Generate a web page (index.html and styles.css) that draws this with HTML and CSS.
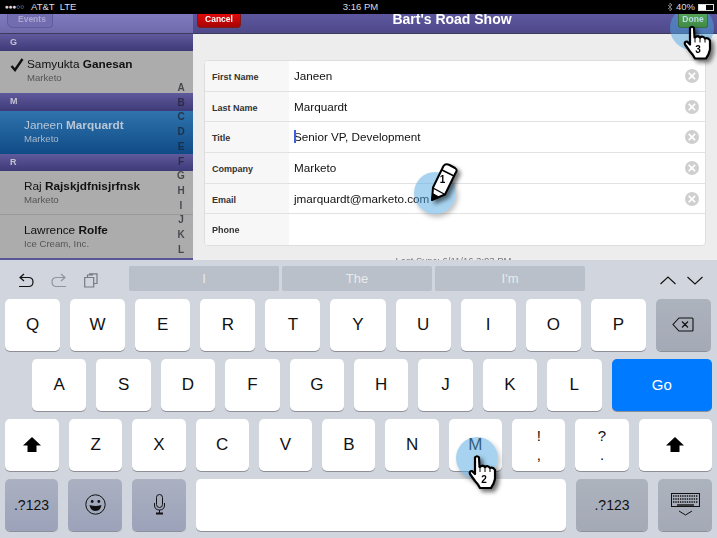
FILE: index.html
```html
<!doctype html>
<html lang="en">
<head>
	<meta charset="utf-8">
	<title>Bart's Road Show</title>
	<link rel="stylesheet" href="styles.css">
</head>
<body>
	<div class="screen">
		<div class="status">
			<div class="status-left"><span class="signal">●●●○○</span>AT&amp;T &nbsp;LTE</div>
			<div class="status-time">3:16 PM</div>
			<div class="status-right">
				<svg class="bt" width="6" height="10" viewBox="0 0 6 10"><path d="M1 3 L5 7 L3 9 V1 L5 3 L1 7" fill="none" stroke="#777" stroke-width="1"/></svg>
				<span>40%</span>
				<span class="battery"><span class="battery-fill"></span></span>
			</div>
		</div>

		<div class="main">
			<div class="sidebar">
				<div class="nav nav-side">
					<div class="btn-events">Events</div>
				</div>
				<div class="section">G</div>
				<div class="person person-first">
					<svg class="check" width="14" height="14" viewBox="0 0 14 14"><path d="M1.5 8 L5 12 L12.5 1" fill="none" stroke="#111" stroke-width="2.4"/></svg>
					<div class="person-name">Samyukta <b>Ganesan</b></div>
					<div class="person-co">Marketo</div>
				</div>
				<div class="section section-m">M</div>
				<div class="person person-selected">
					<div class="person-name">Janeen <b>Marquardt</b></div>
					<div class="person-co">Marketo</div>
				</div>
				<div class="section">R</div>
				<div class="person person-line">
					<div class="person-name">Raj <b>Rajskjdfnisjrfnsk</b></div>
					<div class="person-co">Marketo</div>
				</div>
				<div class="person person-end">
					<div class="person-name">Lawrence <b>Rolfe</b></div>
					<div class="person-co">Ice Cream, Inc.</div>
				</div>
				<div class="alpha">
					<span>A</span><span>B</span><span>C</span><span>D</span><span>E</span><span>F</span><span>G</span><span>H</span><span>I</span><span>J</span><span>K</span><span>L</span>
				</div>
			</div>

			<div class="detail">
				<div class="nav nav-detail">
					<div class="btn-cancel">Cancel</div>
					<div class="nav-title">Bart's Road Show</div>
					<div class="btn-done">Done</div>
				</div>
				<div class="form-area">
					<div class="card">
						<div class="field">
							<div class="field-label">First Name</div>
							<div class="field-value">Janeen</div>
							<span class="clear">×</span>
						</div>
						<div class="field">
							<div class="field-label">Last Name</div>
							<div class="field-value">Marquardt</div>
							<span class="clear">×</span>
						</div>
						<div class="field">
							<div class="field-label">Title</div>
							<div class="field-value"><span class="caret"></span>Senior VP, Development</div>
							<span class="clear">×</span>
						</div>
						<div class="field">
							<div class="field-label">Company</div>
							<div class="field-value">Marketo</div>
							<span class="clear">×</span>
						</div>
						<div class="field">
							<div class="field-label">Email</div>
							<div class="field-value">jmarquardt@marketo.com</div>
							<span class="clear">×</span>
						</div>
						<div class="field">
							<div class="field-label">Phone</div>
							<div class="field-value"></div>
						</div>
					</div>
					<div class="sync">Last Sync: 6/11/16 3:03 PM</div>
				</div>
			</div>
		</div>

		<div class="keyboard">
			<div class="toolbar">
				<div class="tools">
					<svg width="16" height="15" viewBox="0 0 16 15"><path d="M1 13.5 H10.5 Q15 13.5 15 9 Q15 4.5 10.5 4.5 H2 M6 1 L2 4.5 L6 8" fill="none" stroke="#111" stroke-width="1.2"/></svg>
					<svg width="16" height="15" viewBox="0 0 16 15"><path d="M15 13.5 H5.5 Q1 13.5 1 9 Q1 4.5 5.5 4.5 H14 M10 1 L14 4.5 L10 8" fill="none" stroke="#8f939c" stroke-width="1.2"/></svg>
					<svg width="14" height="15" viewBox="0 0 14 15"><path d="M.7 4.5 H9.7 V14 H.7 Z M3.5 4 V2 H9 M5 .8 H13 V10.5 H10" fill="none" stroke="#777b84" stroke-width="1.2"/></svg>
				</div>
				<div class="suggestions">
					<div class="suggestion">I</div>
					<div class="suggestion">The</div>
					<div class="suggestion">I'm</div>
				</div>
				<div class="arrows">
					<svg width="16" height="9" viewBox="0 0 16 9"><path d="M.5 8 L8 1 L15.5 8" fill="none" stroke="#111" stroke-width="1.1"/></svg>
					<svg width="16" height="9" viewBox="0 0 16 9"><path d="M.5 1 L8 8 L15.5 1" fill="none" stroke="#111" stroke-width="1.1"/></svg>
				</div>
			</div>

			<div class="row row-top">
				<div class="key">Q</div><div class="key">W</div><div class="key">E</div><div class="key">R</div><div class="key">T</div><div class="key">Y</div><div class="key">U</div><div class="key">I</div><div class="key">O</div><div class="key">P</div>
				<div class="key key-gray">
					<svg width="22" height="15" viewBox="0 0 22 15"><path d="M7 1 H20 Q21 1 21 2 V13 Q21 14 20 14 H7 L1 7.5 Z M10 4.5 L16 10.5 M16 4.5 L10 10.5" fill="none" stroke="#111" stroke-width="1.1"/></svg>
				</div>
			</div>
			<div class="row row-home">
				<div class="key">A</div><div class="key">S</div><div class="key">D</div><div class="key">F</div><div class="key">G</div><div class="key">H</div><div class="key">J</div><div class="key">K</div><div class="key">L</div>
				<div class="key key-go">Go</div>
			</div>
			<div class="row row-low">
				<div class="key">
					<svg width="18" height="16" viewBox="0 0 18 16"><path d="M9 0 L18 8.5 H13.5 V15 H4.5 V8.5 H0 Z" fill="#000"/></svg>
				</div>
				<div class="key">Z</div><div class="key">X</div><div class="key">C</div><div class="key">V</div><div class="key">B</div><div class="key">N</div><div class="key">M</div>
				<div class="key key-stack"><span>!</span><span>,</span></div>
				<div class="key key-stack"><span>?</span><span>.</span></div>
				<div class="key key-shift-r">
					<svg width="18" height="16" viewBox="0 0 18 16"><path d="M9 0 L18 8.5 H13.5 V15 H4.5 V8.5 H0 Z" fill="#000"/></svg>
				</div>
			</div>
			<div class="row row-bottom">
				<div class="key key-blue key-small">.?123</div>
				<div class="key key-blue">
					<svg width="21" height="21" viewBox="0 0 21 21"><circle cx="10.5" cy="10.5" r="9.7" fill="none" stroke="#111" stroke-width="1"/><circle cx="7.2" cy="7.5" r="1.4" fill="#111"/><circle cx="13.8" cy="7.5" r="1.4" fill="#111"/><path d="M4.5 11 Q10.5 13 16.5 11 Q15.5 17 10.5 17 Q5.5 17 4.5 11 Z" fill="#111"/></svg>
				</div>
				<div class="key key-blue">
					<svg width="11" height="21" viewBox="0 0 11 21"><rect x="2.5" y=".5" width="6" height="13" rx="3" fill="none" stroke="#111"/><path d="M.5 9 V11 Q.5 16 5.5 16 Q10.5 16 10.5 11 V9 M5.5 16 V19" fill="none" stroke="#111"/><rect x="2" y="18.5" width="7" height="2" fill="#111"/></svg>
				</div>
				<div class="key key-space"></div>
				<div class="key key-gray key-num">.?123</div>
				<div class="key key-gray key-hide">
					<svg width="29" height="23" viewBox="0 0 29 23"><rect x=".5" y=".5" width="28" height="13" fill="none" stroke="#111"/><path d="M2 3 H27 M2 6 H27 M2 9 H27" stroke="#111" stroke-width="1.6" stroke-dasharray="1.4 .9"/><path d="M6 12 H23" stroke="#111" stroke-width="1.4"/><path d="M8 18 L14.5 22 L21 18" fill="none" stroke="#111"/></svg>
				</div>
			</div>
		</div>

		<div class="spot spot-done"></div>
		<div class="spot spot-email"></div>
		<div class="spot spot-key"></div>

		<svg class="pointer pencil" width="36" height="48" viewBox="0 0 36 48">
			<path d="M7 40 L8 27.5 L18.5 6 Q20.5 3 24.5 5 L30 8 Q33 10 30.5 13 L20 34.5 Z" fill="#fff" stroke="#000" stroke-width="2" stroke-linejoin="round"/>
			<path d="M17 10 L29 16" stroke="#000" stroke-width="1.5"/>
			<path d="M7 40 L7.6 33.5 L14 37 Z" fill="#000" stroke="#000"/>
			<path d="M8 28 L20 34.5" stroke="#000" stroke-width="1.4"/>
			<text x="17.5" y="23" class="pointer-num">1</text>
		</svg>
		<svg class="pointer hand hand-key" width="30" height="34" viewBox="0 0 30 34">
			<path d="M7 2.5 Q9 0 11 2.5 L11.5 12 Q15 9.5 17 12 Q20 10 22 13 Q25 11.5 27 15 L27 24 Q26 29 23 33 L12 33 Q10 29 7 26 L2 19 Q1 16 4 16 L7 19 Z" fill="#fff" stroke="#000" stroke-width="2.2" stroke-linejoin="round"/>
			<path d="M12 12 V17 M17 12 V17 M22 13 V17" stroke="#000" stroke-width="1"/>
			<text x="16" y="28" class="pointer-num">2</text>
		</svg>
		<svg class="pointer hand hand-done" width="30" height="35" viewBox="0 0 30 34">
			<path d="M7 2.5 Q9 0 11 2.5 L11.5 12 Q15 9.5 17 12 Q20 10 22 13 Q25 11.5 27 15 L27 24 Q26 29 23 33 L12 33 Q10 29 7 26 L2 19 Q1 16 4 16 L7 19 Z" fill="#fff" stroke="#000" stroke-width="2.2" stroke-linejoin="round"/>
			<path d="M12 12 V17 M17 12 V17 M22 13 V17" stroke="#000" stroke-width="1"/>
			<text x="15" y="27" class="pointer-num">3</text>
		</svg>
	</div>
</body>
</html>
```

FILE: styles.css
```css
* {
	box-sizing: border-box;
}

body {
	margin: 0;
	background: #d1d5dd;
	font-family: "Liberation Sans", Arial, sans-serif;
}

.screen {
	position: relative;
	width: 717px;
	height: 538px;
	overflow: hidden;
	display: flex;
	flex-direction: column;
}

/* status bar */
.status {
	position: relative;
	z-index: 5;
	height: 14px;
	flex: none;
	background: #000;
	color: #ddd;
	font-size: 9.5px;
	line-height: 14px;
	display: flex;
	justify-content: space-between;
	padding: 0 3px 0 5px;
}

.signal {
	display: inline-block;
	width: 26px;
	font-size: 6.6px;
	vertical-align: 1px;
	letter-spacing: -0.2px;
}

.status-left {
	width: 200px;
}

.status-time {
	padding-left: 2px;
}

.status-right {
	width: 200px;
	display: flex;
	justify-content: flex-end;
	align-items: center;
	gap: 3px;
}

.battery {
	width: 16px;
	height: 7px;
	border: 1px solid #ddd;
	display: block;
}

.battery-fill {
	display: block;
	width: 7px;
	height: 100%;
	background: #fff;
}

.main {
	height: 246px;
	flex: none;
	display: flex;
	overflow: hidden;
}

/* app part is a bit soft like the source capture */
.sidebar,
.form-area,
.nav-title,
.btn-cancel,
.btn-done {
	filter: blur(0.35px);
}

.nav {
	height: 20px;
	display: flex;
	align-items: flex-start;
	border-bottom: 1px solid #3d3a5c;
}

.sidebar {
	position: relative;
	width: 193px;
	flex: none;
	background: #acacac;
	overflow: hidden;
}

.nav-side {
	background: linear-gradient(#7e7abd, #6f6bab);
	padding-left: 7px;
}

.btn-events {
	width: 46px;
	height: 14px;
	background: #716db0;
	border: 1px solid #5f5b9c;
	border-top: 0;
	border-radius: 0 0 4px 6px;
	color: #aba8d2;
	font-size: 8.5px;
	font-weight: bold;
	line-height: 11px;
	padding-left: 10px;
}

.section {
	height: 17px;
	background: linear-gradient(#5f5a9c, #3e3a78);
	color: #c3c2cf;
	font-size: 9px;
	font-weight: bold;
	line-height: 16px;
	padding-left: 10px;
}

.section-m {
	height: 18px;
}

.person {
	height: 42px;
	padding: 7px 0 0 27px;
	color: #111;
}

.person-first {
	padding-top: 6px;
}

.person-selected {
	height: 43px;
	padding-left: 24px;
	background: linear-gradient(#2f73ad, #0f4b87);
	color: #b9c7d6;
}

.person-line {
	height: 44px;
	padding: 8px 0 0 24px;
	border-bottom: 1px solid #999;
}

.person-end {
	height: 45px;
	padding: 8px 0 0 24px;
	border-bottom: 2px solid #5a5599;
}

.person-name {
	font-size: 11.8px;
	line-height: 14px;
}

.person-co {
	font-size: 9.6px;
	line-height: 14px;
	color: #555;
}

.person-selected .person-co {
	color: #a9b9cb;
}

.check {
	position: absolute;
	left: 10px;
	top: 44px;
}

.alpha {
	position: absolute;
	top: 67px;
	right: 5px;
	width: 14px;
	display: flex;
	flex-direction: column;
	align-items: center;
	font-size: 10px;
	font-weight: bold;
	line-height: 14.7px;
	color: rgba(30, 30, 40, 0.72);
}

/* edit form */
.detail {
	flex: 1;
	display: flex;
	flex-direction: column;
	background: #ededed;
}

.nav-detail {
	background: linear-gradient(#5d579f, #4e4989);
	justify-content: space-between;
	padding: 0 9px 0 4px;
	flex: none;
}

.btn-cancel {
	width: 44px;
	height: 14px;
	background: linear-gradient(#e00a0a, #a80303);
	border: 1px solid #7d1a1a;
	border-top: 0;
	border-radius: 0 0 4px 4px;
	color: #fff;
	font-size: 8.5px;
	font-weight: bold;
	line-height: 11px;
	text-align: center;
}

.nav-title {
	color: #fff;
	font-size: 14px;
	font-weight: bold;
	line-height: 10px;
	margin-right: 15px;
}

/* sits above its tap marker */
.btn-done {
	position: relative;
	z-index: 4;
	width: 30px;
	height: 14px;
	background: linear-gradient(#55a35a, #3f8a45);
	border: 1px solid #3a6e3a;
	border-top: 0;
	border-radius: 0 0 3px 3px;
	color: #b9dce8;
	font-size: 8.5px;
	font-weight: bold;
	line-height: 11px;
	text-align: center;
}

.form-area {
	flex: 1;
	padding: 26px 11px 0;
	text-align: center;
}

.card {
	background: #fff;
	border: 1px solid #dedede;
	border-radius: 4px;
	overflow: hidden;
	text-align: left;
}

.field {
	position: relative;
	height: 30.7px;
	display: flex;
	border-bottom: 1px solid #e2e2e2;
}

.field:last-child {
	border-bottom: 0;
}

.field-label {
	width: 84px;
	flex: none;
	background: #f7f7f7;
	color: #333;
	font-size: 9px;
	font-weight: bold;
	line-height: 32px;
	padding-left: 7px;
}

.field-value {
	position: relative;
	flex: 1;
	color: #111;
	font-size: 11.7px;
	line-height: 29px;
	padding-left: 5px;
}

.caret {
	position: absolute;
	left: 5px;
	top: 8px;
	width: 2px;
	height: 13px;
	background: #3f5fe0;
}

.clear {
	position: absolute;
	right: 6px;
	top: 8px;
	width: 14px;
	height: 14px;
	border-radius: 50%;
	background: #cfcfcf;
	color: #fff;
	font-size: 15px;
	font-weight: bold;
	line-height: 13px;
	text-align: center;
}

.sync {
	margin-top: 9px;
	padding-right: 3px;
	color: #777;
	font-size: 9.5px;
	line-height: 11px;
}

/* keyboard */
.keyboard {
	flex: 1;
	background: #d1d5dd;
	padding-top: 6px;
}

.toolbar {
	height: 25px;
	display: flex;
	margin-bottom: 8px;
}

.tools {
	width: 129px;
	padding: 7px 0 0 18px;
	display: flex;
	align-items: flex-start;
	gap: 17px;
}

.suggestions {
	display: flex;
	gap: 3px;
}

.suggestion {
	width: 150px;
	height: 25px;
	background: #b9c0c9;
	border-radius: 2px;
	color: #e8ebee;
	font-size: 13px;
	line-height: 25px;
	text-align: center;
}

.arrows {
	flex: 1;
	display: flex;
	justify-content: flex-end;
	gap: 11px;
	padding: 10px 14px 0 0;
}

.row {
	display: flex;
	height: 51.5px;
	margin-bottom: 8.5px;
	gap: 10px;
	padding: 0 5px;
}

.key {
	width: 55px;
	flex: none;
	background: #fff;
	border-radius: 5px;
	box-shadow: 0 1px 0 #8d9098;
	color: #111;
	font-size: 17px;
	display: flex;
	align-items: center;
	justify-content: center;
}

.row-top .key {
	width: 55.1px;
}

.row-home {
	padding-left: 32px;
}

.row-home .key {
	width: 54.4px;
}

.row-home .key-go {
	flex: 1;
	background: #007aff;
	color: #fff;
	font-size: 15px;
}

.row-low .key {
	width: 53.3px;
}

.row-low .key:first-child {
	width: 54px;
}

.row-low .key-shift-r {
	width: 73px;
}

.key-stack {
	flex-direction: column;
	font-size: 15px;
	line-height: 19px;
}

.key-gray {
	background: linear-gradient(#adb3bd, #a4a9b6);
}

.key-blue {
	background: linear-gradient(#abb1c1, #9ca2b9);
}

.key-small,
.key-num {
	font-size: 14px;
}

.row-bottom .key {
	width: 54px;
}

.row-bottom .key:first-child {
	width: 53px;
}

.row-bottom .key-space {
	width: 370px;
}

.row-bottom .key-num {
	width: 72px;
}

/* tap markers */
.spot {
	position: absolute;
	z-index: 3;
	width: 42px;
	height: 42px;
	border-radius: 50%;
	background: rgba(80, 168, 225, 0.5);
}

.spot-done {
	left: 670px;
	top: 6px;
	width: 44px;
	height: 44px;
}

.spot-email {
	left: 414px;
	top: 172px;
	box-shadow: 2px 3px 5px rgba(0, 0, 0, 0.25);
}

.spot-key {
	left: 456px;
	top: 437px;
	box-shadow: 2px 3px 5px rgba(0, 0, 0, 0.25);
}

.pointer {
	position: absolute;
	z-index: 4;
	filter: drop-shadow(3px 3px 2px rgba(0, 0, 0, 0.55));
}

.pointer-num {
	font-family: "Liberation Sans", Arial, sans-serif;
	font-size: 10px;
	font-weight: bold;
	text-anchor: middle;
	fill: #000;
}

.pencil {
	left: 425px;
	top: 160px;
}

.hand-key {
	left: 468px;
	top: 455px;
}

.hand-done {
	left: 683px;
	top: 25px;
}
```
